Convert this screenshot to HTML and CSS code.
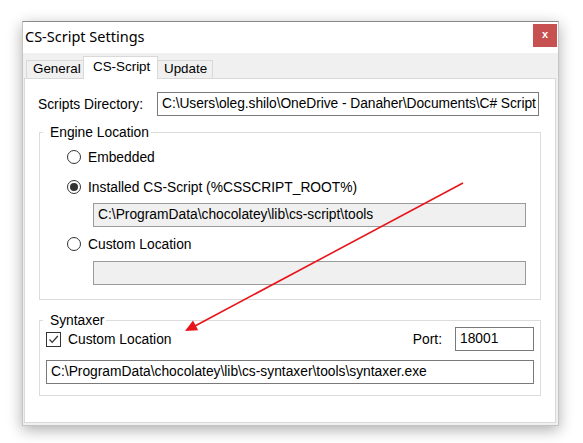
FILE: index.html
```html
<!DOCTYPE html>
<html>
<head>
<meta charset="utf-8">
<link rel="stylesheet" href="styles.css">
</head>
<body>
<div class="stage">
  <div class="window">
    <div class="titlebar">
      <span class="title">CS-Script Settings</span>
      <div class="close">x</div>
    </div>
    <div class="client">
      <div class="tabs">
        <div class="tab">General</div>
        <div class="tab active">CS-Script</div>
        <div class="tab">Update</div>
      </div>
      <div class="page">
        <div class="dir-row">
          <span class="dir-label">Scripts Directory:</span>
          <div class="tb dir-tb">C:\Users\oleg.shilo\OneDrive - Danaher\Documents\C# Script</div>
        </div>

        <div class="group engine">
          <span class="legend">Engine Location</span>
          <div class="radio-row r1"><span class="radio"></span><span>Embedded</span></div>
          <div class="radio-row r2"><span class="radio checked"></span><span>Installed CS-Script (%CSSCRIPT_ROOT%)</span></div>
          <div class="tb disabled eng-tb t1">C:\ProgramData\chocolatey\lib\cs-script\tools</div>
          <div class="radio-row r3"><span class="radio"></span><span>Custom Location</span></div>
          <div class="tb disabled eng-tb t2"></div>
        </div>

        <div class="group syntaxer">
          <span class="legend">Syntaxer</span>
          <div class="syn-row">
            <span class="check"><svg width="13" height="13" viewBox="0 0 13 13"><path d="M2.5 6.5 L5.2 9.4 L10.8 3" fill="none" stroke="#333" stroke-width="1.3"/></svg></span>
            <span class="check-label">Custom Location</span>
            <span class="port-label">Port:</span>
            <div class="tb port-tb">18001</div>
          </div>
          <div class="tb syn-tb">C:\ProgramData\chocolatey\lib\cs-syntaxer\tools\syntaxer.exe</div>
        </div>
      </div>
    </div>
  </div>
  <svg class="arrow" width="583" height="443" viewBox="0 0 583 443">
    <line x1="463" y1="183" x2="195" y2="326" stroke="#e8141a" stroke-width="1.6"/>
    <polygon points="185,331 198.2,330.2 193,320.6" fill="#e8141a"/>
  </svg>
</div>
</body>
</html>
```
FILE: styles.css
```css
html, body {
  margin: 0;
  padding: 0;
  background: #ffffff;
}
.stage {
  position: relative;
  width: 583px;
  height: 443px;
  padding: 21px 0 0 22px;
  box-sizing: border-box;
  font-family: "Liberation Sans", Arial, sans-serif;
  font-size: 13.8px;
  color: #000;
}
.window {
  width: 537px;
  height: 405px;
  box-sizing: border-box;
  border: 1px solid #c4c4c4;
  border-top-color: #8a8a8a;
  background: #f0f0f0;
  box-shadow: 0 4px 14px rgba(0, 0, 0, 0.32);
  display: flex;
  flex-direction: column;
}
.titlebar {
  height: 31px;
  background: #ffffff;
  display: flex;
  align-items: flex-start;
  justify-content: space-between;
}
.title {
  font-family: "Noto Sans", "Open Sans", sans-serif;
  font-size: 14.5px;
  line-height: 20px;
  margin: 4px 0 0 2px;
  color: #000;
}
.close {
  width: 24px;
  height: 23px;
  margin: 2px 1px 0 0;
  background: #c75050;
  color: #fff;
  font-weight: bold;
  font-size: 11px;
  line-height: 21px;
  text-align: center;
}
.client {
  flex: 1;
  display: flex;
  flex-direction: column;
}
.tabs {
  height: 25px;
  display: flex;
  align-items: flex-end;
  padding-left: 3px;
  position: relative;
  z-index: 1;
  font-size: 13.4px;
}
.tab {
  height: 18px;
  box-sizing: border-box;
  border: 1px solid #d9d9d9;
  border-bottom: none;
  background: #f0f0f0;
  line-height: 15px;
  padding: 0 6px;
  margin-right: -1px;
}
.tab:first-child {
  width: 58px;
}
.tab.active {
  height: 23px;
  margin-bottom: -1px;
  background: #ffffff;
  line-height: 20px;
  width: 75px;
  padding: 0 0 0 9px;
  position: relative;
  z-index: 2;
}
.tab:last-child {
  width: 56px;
}
.page {
  flex: 1;
  margin: 0 2px 2px 1px;
  border: 1px solid #d9d9d9;
  background: #ffffff;
  display: flex;
  flex-direction: column;
  padding: 0 14px;
}
.dir-row {
  display: flex;
  align-items: center;
  margin-top: 13px;
  height: 24px;
}
.dir-label {
  width: 119px;
  flex: none;
  margin-left: -1px;
}
.tb {
  box-sizing: border-box;
  height: 24px;
  border: 1px solid #7a7a7a;
  background: #fff;
  line-height: 22px;
  padding-left: 4px;
  white-space: nowrap;
  overflow: hidden;
}
.tb.disabled {
  background: #f0f0f0;
  border-color: #9a9a9a;
}
.dir-tb {
  width: 382px;
  letter-spacing: -0.06px;
}
.group {
  border: 1px solid #dcdcdc;
  display: flex;
  flex-direction: column;
}
.legend {
  align-self: flex-start;
  background: #fff;
  line-height: 16px;
  height: 16px;
  margin: -8px 0 0 3px;
  padding: 0 2px 0 7px;
}
.engine {
  margin-top: 16px;
  height: 168px;
  box-sizing: border-box;
}
.radio-row {
  display: flex;
  align-items: center;
  height: 20px;
  padding-left: 27px;
  gap: 7px;
}
.radio {
  width: 14px;
  height: 14px;
  box-sizing: border-box;
  border: 1px solid #333;
  border-radius: 50%;
  background: #fff;
  display: flex;
  align-items: center;
  justify-content: center;
}
.radio.checked::after {
  content: "";
  width: 8px;
  height: 8px;
  border-radius: 50%;
  background: #333;
}
.r1 { margin-top: 6px; }
.r2 { margin-top: 10px; }
.t1 { margin-top: 6px; }
.r3 { margin-top: 7px; }
.t2 { margin-top: 7px; }
.eng-tb {
  margin-left: 53px;
  margin-right: 14px;
}
.syntaxer {
  margin-top: 20px;
  height: 76px;
  box-sizing: border-box;
}
.syn-row {
  display: flex;
  align-items: center;
  height: 24px;
  margin-top: -2px;
  padding: 0 6px;
}
.check {
  width: 15px;
  height: 15px;
  box-sizing: border-box;
  border: 1px solid #333;
  background: #fff;
  display: flex;
  align-items: center;
  justify-content: center;
}
.check-label {
  margin-left: 7px;
}
.port-label {
  margin-left: auto;
  margin-right: 13px;
}
.port-tb {
  width: 79px;
}
.syn-tb {
  margin: 9px 6px 0 6px;
}
.arrow {
  position: absolute;
  left: 0;
  top: 0;
  pointer-events: none;
}
```
